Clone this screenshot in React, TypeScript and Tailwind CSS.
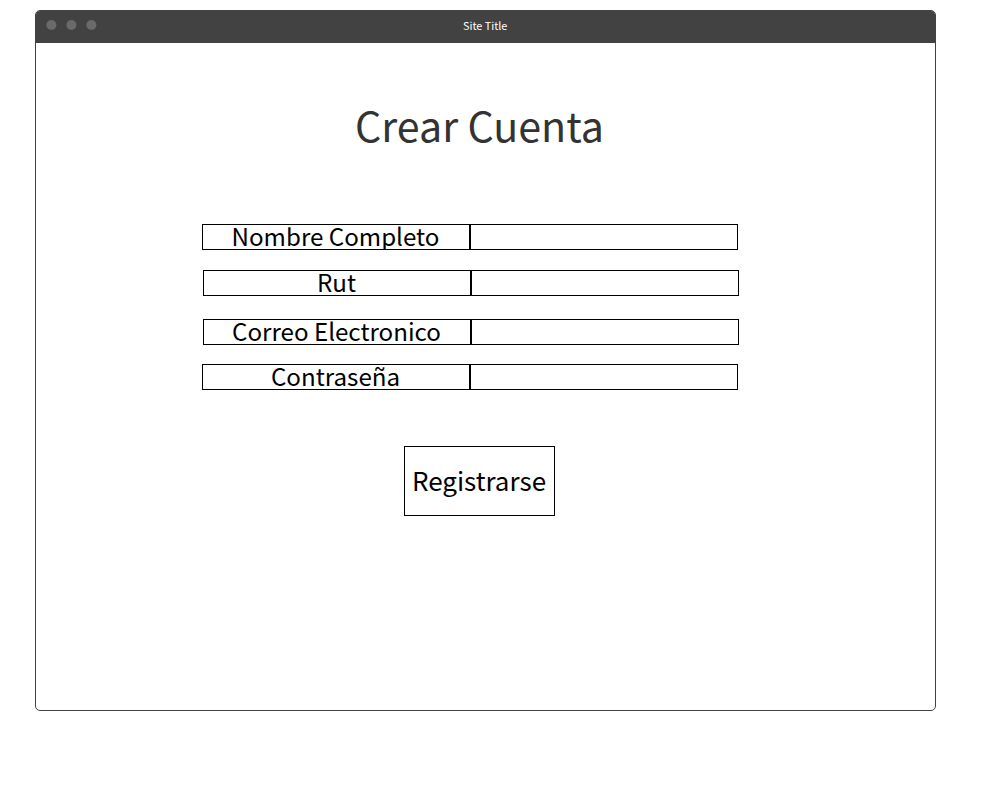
const fields = [
  { label: 'Nombre Completo', row: 'ml-[166px]' },
  { label: 'Rut', row: 'ml-[167px] mt-5' },
  { label: 'Correo Electronico', row: 'ml-[167px] mt-[23px]' },
  { label: 'Contraseña', row: 'ml-[166px] mt-[19px]' },
];

export default function App() {
  return (
    <div className="h-[810px] w-[1000px] bg-white pt-[10px] pl-[35px] font-['Noto_Sans_CJK_SC',sans-serif] text-black">
      <div className="h-[701px] w-[901px] overflow-hidden rounded-[5px] border border-[#424242] bg-white">
        <header className="grid h-8 grid-cols-[1fr_auto_1fr] items-center bg-[#424242]">
          <svg className="mb-1 ml-[10px] h-[10px] w-[51px]" viewBox="0 0 51 10" fill="#6a6a6a">
            <circle cx="5.4" cy="5" r="5" />
            <circle cx="25.4" cy="5" r="5" />
            <circle cx="45.4" cy="5" r="5" />
          </svg>
          <span className="pr-[0.6px] pb-[3px] text-[10.8px] leading-[27px] text-white">Site Title</span>
        </header>
        <h1 className="mt-[49px] w-[887px] text-center text-[41.2px] leading-[64px] text-[#333333]">Crear Cuenta</h1>
        <form className="mt-[68px]" onSubmit={(e) => e.preventDefault()}>
          {fields.map((f) => (
            <label key={f.label} className={`flex h-[26px] w-[536px] ${f.row}`}>
              <span className="flex w-[268px] justify-center overflow-hidden border border-black pr-px">
                <span className="text-[24.15px] leading-[22px] whitespace-nowrap">{f.label}</span>
              </span>
              <input className="w-[268px] border border-black px-2 text-base outline-none" />
            </label>
          ))}
          <button className="mt-14 ml-[368px] flex h-[70px] w-[151px] items-center justify-center border border-black pr-px pb-[3px] text-[26px] leading-[40px]">
            Registrarse
          </button>
        </form>
      </div>
    </div>
  );
}
